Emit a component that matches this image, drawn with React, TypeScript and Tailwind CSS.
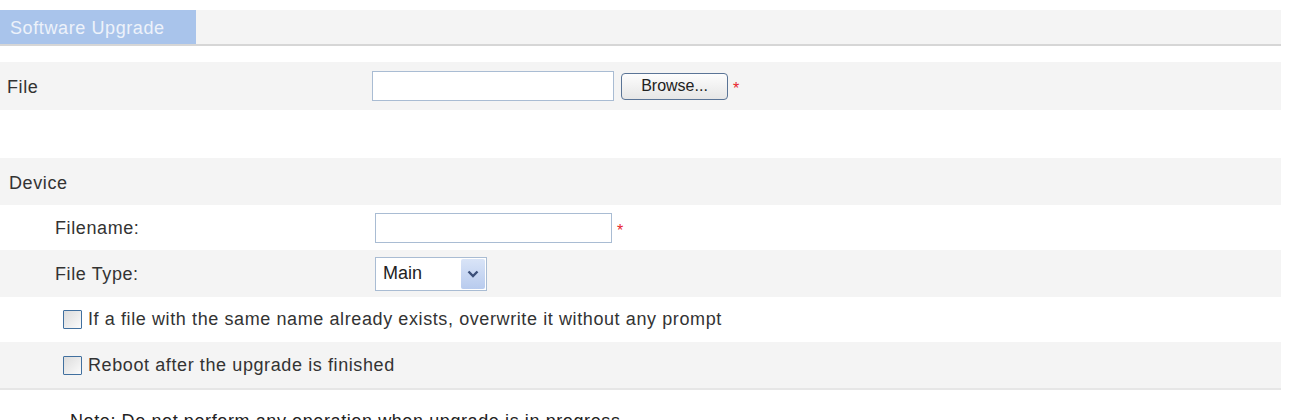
import { useState } from 'react';

const font = { fontFamily: '"Liberation Sans", Arial, sans-serif' };

function Asterisk() {
  return <span className="ml-[5px] text-[16px] leading-none text-[#e8262b] mt-[6px]">*</span>;
}

function Checkbox({ checked, onChange }: { checked: boolean; onChange: () => void }) {
  return (
    <button
      type="button"
      onClick={onChange}
      className="w-[19px] h-[19px] border border-[#41709f] rounded-[1px] bg-gradient-to-br from-[#dcdcdc] to-[#fbfbfb] flex items-center justify-center"
    >
      {checked && <span className="text-[12px] leading-none text-[#222]">✓</span>}
    </button>
  );
}

export default function App() {
  const [overwrite, setOverwrite] = useState(false);
  const [reboot, setReboot] = useState(false);

  return (
    <div className="w-[1290px] h-[420px] overflow-hidden bg-white text-[#333] text-[18px] tracking-[0.6px]" style={font}>
      <div className="pt-[10px] pr-[9px]">
        {/* tab strip */}
        <div className="h-[36px] flex bg-[#f4f4f4] border-b-2 border-[#d6d6d6]">
          <div className="w-[196px] bg-[#a9c4eb] text-[#edf2fa] flex items-center pl-[10px] pt-[3px]">
            Software Upgrade
          </div>
        </div>

        {/* file row */}
        <div className="mt-[16px] h-[48px] bg-[#f4f4f4] flex items-center">
          <div className="w-[372px] pl-[7px] pt-[3px]">File</div>
          <div className="w-[242px] h-[30px] border border-[#a9bcd3] bg-white" />
          <button
            type="button"
            className="ml-[7px] w-[107px] h-[27px] rounded-[4px] border border-[#5a7496] bg-gradient-to-b from-[#fdfdfd] to-[#e6e6e6] text-[16px] tracking-normal text-[#222] leading-none"
          >
            Browse...
          </button>
          <Asterisk />
        </div>

        {/* device section */}
        <div className="mt-[48px]">
          <div className="h-[47px] bg-[#f4f4f4] flex items-center pl-[9px] pt-[3px]">Device</div>
          <div className="h-[45px] bg-white flex items-center">
            <div className="w-[375px] pl-[55px] pt-[2px]">Filename:</div>
            <div className="w-[237px] h-[30px] border border-[#a9bcd3] bg-white" />
            <Asterisk />
          </div>
          <div className="h-[47px] bg-[#f4f4f4] flex items-center">
            <div className="w-[375px] pl-[55px] pt-[2px]">File Type:</div>
            <div className="w-[112px] h-[34px] border border-[#a9bcd3] bg-white flex items-center">
              <span className="flex-1 pl-[7px] text-[18px] tracking-normal text-[#222]">Main</span>
              <span className="w-[24px] h-[30px] mr-[1px] bg-gradient-to-b from-[#d9e4f7] to-[#b8cbee] rounded-[2px] flex items-center justify-center">
                <svg width="12" height="8" viewBox="0 0 12 8">
                  <path d="M1.5 1.5 L6 6 L10.5 1.5" fill="none" stroke="#3b4f79" strokeWidth="2.4" />
                </svg>
              </span>
            </div>
          </div>
          <div className="h-[45px] bg-white flex items-center pl-[63px] gap-[6px]">
            <Checkbox checked={overwrite} onChange={() => setOverwrite(!overwrite)} />
            <span>If a file with the same name already exists, overwrite it without any prompt</span>
          </div>
          <div className="h-[48px] bg-[#f4f4f4] flex items-center pl-[63px] gap-[6px] border-b-2 border-[#e6e6e6]">
            <Checkbox checked={reboot} onChange={() => setReboot(!reboot)} />
            <span>Reboot after the upgrade is finished</span>
          </div>
        </div>

        <div className="pt-[18px] pl-[70px] text-[#222]">
          Note: Do not perform any operation when upgrade is in progress.
        </div>
      </div>
    </div>
  );
}
